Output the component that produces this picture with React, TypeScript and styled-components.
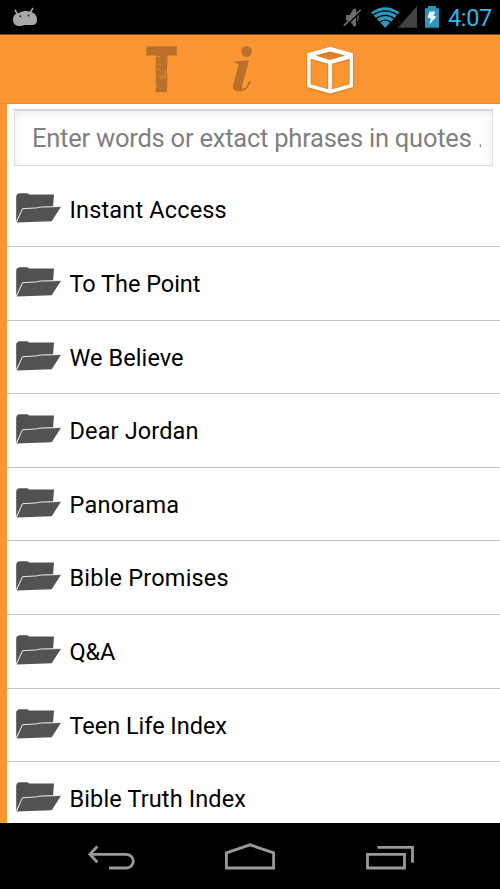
import React from "react";
import styled, { createGlobalStyle } from "styled-components";

const GlobalStyle = createGlobalStyle`
  *, *::before, *::after { box-sizing: border-box; }
  html, body { margin: 0; padding: 0; background: #000; overflow: hidden; }
  svg { display: block; flex: none; }
`;

const Screen = styled.div`
  display: flex;
  flex-direction: column;
  width: 500px;
  height: 889px;
  overflow: hidden;
  background: #000;
  font-family: Roboto, "Noto Sans", sans-serif;
`;

const StatusBar = styled.div`
  display: flex;
  flex: none;
  justify-content: space-between;
  height: 35px;
  background: #000;
  border-bottom: 1px solid #7d4715;
`;

const StatusIcons = styled.div`
  display: flex;
`;

const Clock = styled.span`
  width: 52px;
  height: 34px;
  font-size: 23.5px;
  line-height: 37px;
  letter-spacing: -0.35px;
  color: #33b5e5;
  white-space: nowrap;
`;

const Header = styled.header`
  display: flex;
  flex: none;
  height: 69px;
  padding-left: 130px;
  background: #fa9632;
  border-bottom: 1px solid #f68c1e;
`;

const Tab = styled.button<{ $width: number }>`
  width: ${(p) => p.$width}px;
  height: 68px;
  padding: 0;
  border: 0;
  background: none;
`;

const Content = styled.main`
  flex: none;
  height: 718.5px;
  overflow: hidden;
  background: #fff;
  border-left: 7px solid #fa9632;
`;

const SearchField = styled.div`
  height: 57px;
  margin: 5px 7px 7.3px;
  padding: 0 12px 0 17px;
  border: 1px solid #dedede;
  border-top: 2px solid #d5d5d5;
  box-shadow: inset 0 3px 10px rgba(0, 0, 0, 0.07);
`;

const SearchInput = styled.input`
  display: block;
  width: 449px;
  height: 54px;
  padding: 0;
  border: 0;
  outline: 0;
  background: none;
  font: 25.5px/54px Roboto, sans-serif;
  letter-spacing: -0.23px;
  color: #000;
  &::placeholder { color: #808080; opacity: 1; }
`;

const List = styled.ul`
  margin: 0;
  padding: 0;
  list-style: none;
`;

const Row = styled.li`
  display: flex;
  height: 73.63px;
  padding-left: 8px;
  border-bottom: 1px solid #c3c3c3;
`;

const RowLabel = styled.span<{ $spacing: number }>`
  margin-left: 6.5px;
  font-size: 23.5px;
  line-height: 75px;
  letter-spacing: ${(p) => p.$spacing}px;
  color: #000;
  white-space: nowrap;
`;

const NavBar = styled.nav`
  display: flex;
  flex: 1;
  padding-left: 83px;
  background: #000;
`;

const NavButton = styled.button<{ $width: number }>`
  width: ${(p) => p.$width}px;
  height: 66px;
  padding: 0;
  border: 0;
  background: none;
`;

const AndroidIcon = () => (
  <svg width="50" height="34" viewBox="0 0 50 34">
    <path d="M15 10l3 5M33 8l-3 5" stroke="#a8a8a8" strokeWidth="1.5" />
    <path d="M13 20c0-4 2-7 6-7 4-2.5 8-2.5 12-1 4 1 6 4 6 8 0 3-2 5-5 5h-7c-2 0-2 1-5 1-4 0-7-2-7-6z" fill="#a8a8a8" />
    <circle cx="20.3" cy="16.3" r="1" fill="#222" />
    <circle cx="28.6" cy="15.6" r="1" fill="#222" />
  </svg>
);

const SystemIcons = () => (
  <svg width="118" height="34" viewBox="330 0 118 34">
    <path d="M346 15h3.5l4.5-6.5 2 .5v17l-2 .5-4.5-6H346z" fill="#6b6b6b" />
    <path d="M356.8 14q3 3 0 7" fill="none" stroke="#5b5b5b" strokeWidth="1.5" />
    <path d="M344.5 26.8L361.5 10.8" stroke="#000" strokeWidth="1.6" />
    <path d="M343.7 25.7L360.7 9.7" stroke="#777" strokeWidth="1.5" />
    <path d="M371 12.5Q385 2 399.5 12.5L385.2 28z" fill="#2c96bd" />
    <g fill="none" stroke="#000" strokeWidth="1.3">
      <path d="M372.5 15.3Q385.2 6.3 398 15.3" />
      <path d="M375.5 19Q385.2 11.8 395 19" />
      <path d="M379 22.7Q385.2 17.5 391.5 22.7" />
    </g>
    <path d="M398 27.7L417 6v21.7z" fill="#434343" />
    <path d="M425 8.2h3V6h8v2.2h3v19.5h-14z" fill="#2e96be" />
    <path d="M429.5 11.5h6l-2 4.2 3 .8-7.2 8 1.5-6-3.3-.9z" fill="#e5f3f8" />
  </svg>
);

const TypeIcon = () => (
  <svg width="75" height="68" viewBox="130 35 75 68">
    <path d="M146.2 46.2h30.6v9.2h-9.5l.2 8-.6 5 .4 9-.3 14.8h-11.3l.2-15-.3-12 .4-9.8h-9.8z" fill="#ba702a" />
    <g fill="none" stroke="#dd862e" strokeLinecap="round" strokeWidth="1">
      <path d="M157.5 56.5h2l.5 2M157.5 61l1.5-1M159.5 63.5l1 2M157.5 69h2M161 70v1M157 65v1" />
      <path d="M158 76h3l1 1.5 4-.5M162.5 74.5l1.5 2 1-2M165.5 71v3M160 79h1" />
      <path d="M167.4 60v3M156.6 85v2M167.4 80v1" />
    </g>
  </svg>
);

const InfoIcon = () => (
  <svg width="90" height="68" viewBox="205 35 90 68">
    <circle cx="246.6" cy="51.5" r="5.4" fill="#ba702a" />
    <path d="M234.8 61.5l11.5-1.1h2.7l-6.8 25.1c-.6 2.4.1 3.7 1.5 3.2 2.2-.8 4-3.7 5.3-7.5l1.7.5c-2.2 6.6-5.7 9.6-11.3 9.6-5.2 0-7.3-2.6-6.1-7.3l4.7-17c.8-3 .2-3.8-3.4-4.1z" fill="#ba702a" />
    <circle cx="236.7" cy="86" r="3.6" fill="#ba702a" />
  </svg>
);

const cubePath =
  "M330.2 46.7L353 53.3V87L330.2 93.5 307.2 87V53.3z" +
  "M315.3 55.6L330.2 60 345.3 55.6 330.2 51.4z" +
  "M310.6 58.7V84.2L328.2 89.3V63.8z" +
  "M349.7 58.7V84.2L332.1 89.3V63.8z";

const CubeIcon = () => (
  <svg width="70" height="68" viewBox="295 35 70 68">
    <path d="M330.2 51.4L345.3 55.6 330.2 60 315.3 55.6z" fill="#dc8029" />
    <path d={cubePath} transform="translate(0 .5)" fill="none" stroke="#d47c25" strokeWidth="2.2" opacity=".6" />
    <path d={cubePath} fill="#fff" fillRule="evenodd" />
  </svg>
);

const FolderIcon = () => (
  <svg width="48" height="72" viewBox="15 173 48 72">
    <path d="M16.2 197q0-3.3 3-3.7h7q2 0 3 1.3l24.8-.2-1 13-16 .6-14.3 1L16.2 222z" fill="#505251" />
    <path d="M22.7 208.5l38.3-1.7-9.3 14.4-35 1.3z" fill="#525453" />
    <path d="M16.5 221.8l6-13.1 14-.8 4-.9 20-.5" fill="none" stroke="#e8e8e8" strokeWidth="1" />
  </svg>
);

const BackIcon = () => (
  <svg width="57" height="66" viewBox="83 823 57 66">
    <g fill="none" stroke="#999" strokeWidth="2.8">
      <path d="M97.3 846.5l-7.5 7.8 7.5 8" />
      <path d="M90 854.4h36.5a6.8 6.8 0 0 1 0 13.6H109" />
    </g>
  </svg>
);

const HomeIcon = () => (
  <svg width="140" height="66" viewBox="180 823 140 66">
    <path d="M226.4 852.8L250 844.8l23.6 8V868h-47.2z" fill="none" stroke="#999" strokeWidth="2.8" />
  </svg>
);

const RecentsIcon = () => (
  <svg width="60" height="66" viewBox="360 823 60 66">
    <g fill="none" stroke="#999" strokeWidth="2.8">
      <path d="M367.5 854.3h37V868h-37z" />
      <path d="M377.5 847.3h35v15.5" />
    </g>
  </svg>
);

const folders = [
  { name: "Instant Access", spacing: 0.16 },
  { name: "To The Point", spacing: -0.04 },
  { name: "We Believe", spacing: 0.08 },
  { name: "Dear Jordan", spacing: 0.14 },
  { name: "Panorama", spacing: 0.3 },
  { name: "Bible Promises", spacing: 0.2 },
  { name: "Q&A", spacing: -0.2 },
  { name: "Teen Life Index", spacing: -0.03 },
  { name: "Bible Truth Index", spacing: 0.13 },
];

export default function App() {
  return (
    <>
      <GlobalStyle />
      <Screen>
        <StatusBar>
          <AndroidIcon />
          <StatusIcons>
            <SystemIcons />
            <Clock>4:07</Clock>
          </StatusIcons>
        </StatusBar>
        <Header>
          <Tab $width={75} aria-label="Text"><TypeIcon /></Tab>
          <Tab $width={90} aria-label="Information"><InfoIcon /></Tab>
          <Tab $width={70} aria-label="Library"><CubeIcon /></Tab>
        </Header>
        <Content>
          <SearchField>
            <SearchInput placeholder="Enter words or extact phrases in quotes ..." />
          </SearchField>
          <List>
            {folders.map((folder) => (
              <Row key={folder.name}>
                <FolderIcon />
                <RowLabel $spacing={folder.spacing}>{folder.name}</RowLabel>
              </Row>
            ))}
          </List>
        </Content>
        <NavBar>
          <NavButton $width={97} aria-label="Back"><BackIcon /></NavButton>
          <NavButton $width={180} aria-label="Home"><HomeIcon /></NavButton>
          <NavButton $width={60} aria-label="Recent apps"><RecentsIcon /></NavButton>
        </NavBar>
      </Screen>
    </>
  );
}
